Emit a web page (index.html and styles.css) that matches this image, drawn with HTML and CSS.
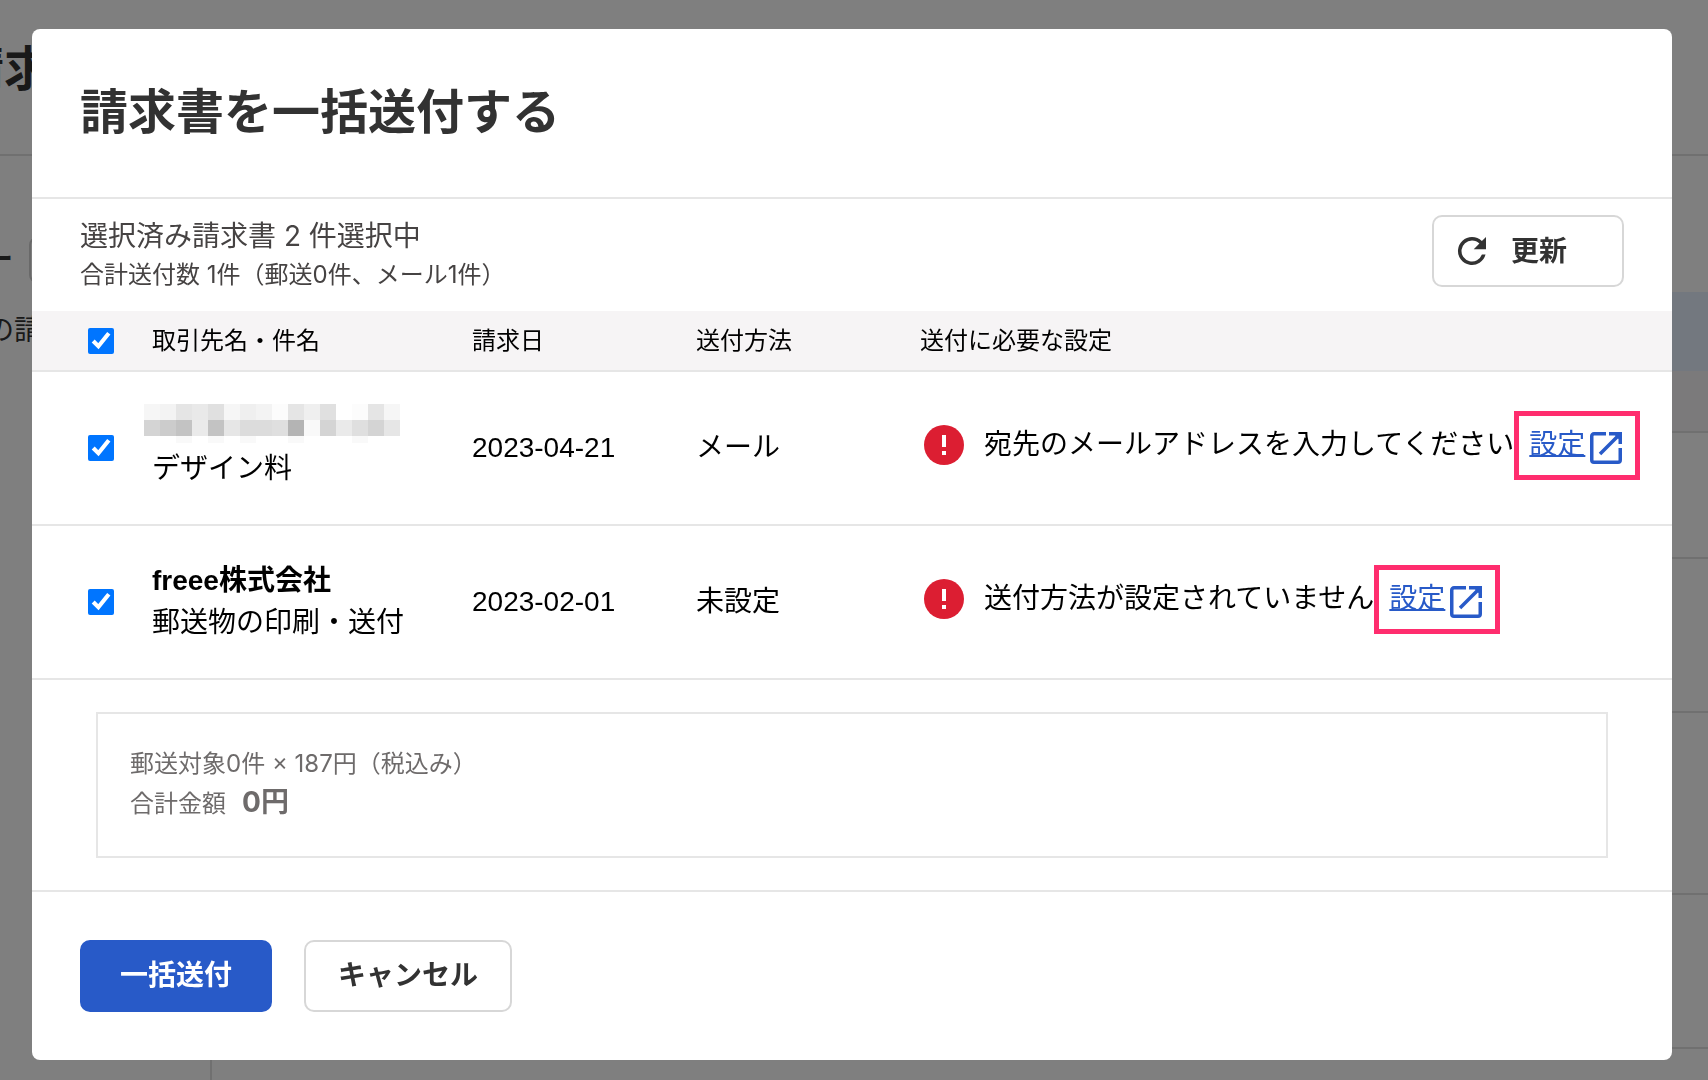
FILE: index.html
```html
<!DOCTYPE html>
<html lang="ja">
	<head>
		<meta charset="UTF-8" />
		<meta name="viewport" content="width=device-width, initial-scale=1.0" />
		<title>請求書を一括送付する</title>

		<link rel="stylesheet" href="styles.css">
	</head>
	<body>
		<!-- page behind the dialog -->
		<div class="page" aria-hidden="true">
			<div class="page-header">請求</div>
			<div class="page-filter">
				<span class="filter-label">ー</span>
				<span class="filter-box"></span>
			</div>
			<div class="page-body">
				<div class="page-side">の請</div>
				<div class="page-list">
					<div class="page-row selected"></div>
					<div class="page-row head"></div>
					<div class="page-row short"></div>
					<div class="page-row"></div>
					<div class="page-row tall"></div>
					<div class="page-row"></div>
				</div>
			</div>
		</div>

		<div class="overlay">
			<div class="modal" role="dialog" aria-labelledby="modalTitle">
				<header class="modal-header">
					<h1 id="modalTitle">請求書を一括送付する</h1>
				</header>

				<div class="toolbar">
					<div>
						<p class="selected-count">選択済み請求書 2 件選択中</p>
						<p class="send-count">合計送付数 1件（郵送0件、メール1件）</p>
					</div>
					<button type="button" class="btn btn-refresh">
						<svg class="icon-refresh" viewBox="0 0 24 24" aria-hidden="true">
							<path d="M17.65 6.35A7.96 7.96 0 0 0 12 4a8 8 0 1 0 7.73 10h-2.08A6 6 0 1 1 12 6c1.66 0 3.14.69 4.22 1.78L13 11h7V4z" />
						</svg>
						更新
					</button>
				</div>

				<table class="invoices">
					<thead>
						<tr>
							<th class="col-check"><input type="checkbox" aria-label="すべて選択" checked /></th>
							<th class="col-name">取引先名・件名</th>
							<th class="col-date">請求日</th>
							<th class="col-method">送付方法</th>
							<th>送付に必要な設定</th>
						</tr>
					</thead>
					<tbody>
						<tr>
							<td class="col-check"><input type="checkbox" aria-label="デザイン料" checked /></td>
							<td>
								<svg class="masked" viewBox="0 0 256 39" shape-rendering="crispEdges" aria-hidden="true">
									<path fill="#f6f6f6" d="M0 0h16v16H0zM80 0h16v16H80zM240 0h16v16h-16z" />
									<path fill="#f3f3f3" d="M16 0h16v16H16zM112 0h16v16h-16z" />
									<path fill="#e5e5e5" d="M32 0h16v16H32zM144 0h16v16h-16zM224 0h16v16h-16z" />
									<path fill="#e9e9e9" d="M48 0h16v16H48z" />
									<path fill="#e0e0e0" d="M64 0h16v16H64zM176 0h16v16h-16z" />
									<path fill="#efefef" d="M96 0h16v16H96zM160 0h16v16h-16z" />
									<path fill="#fcfcfc" d="M128 0h16v16h-16zM208 0h16v16h-16z" />
									<path fill="#d4d4d4" d="M0 16h16v16H0zM176 16h16v16h-16zM224 16h16v16h-16z" />
									<path fill="#cccccc" d="M16 16h16v16H16z" />
									<path fill="#c3c3c3" d="M32 16h16v16H32zM64 16h16v16H64z" />
									<path fill="#eaeaea" d="M48 16h16v16H48zM192 16h16v16h-16z" />
									<path fill="#e6e6e6" d="M80 16h16v16H80zM240 16h16v16h-16z" />
									<path fill="#dcdcdc" d="M96 16h32v16H96z" />
									<path fill="#dfdfdf" d="M128 16h16v16h-16zM208 16h16v16h-16z" />
									<path fill="#b4b4b4" d="M144 16h16v16h-16z" />
									<path fill="#f9f9f9" d="M160 16h16v16h-16zM32 32h16v7H32zM64 32h16v7H64zM96 32h16v7H96zM144 32h16v7h-16zM208 32h16v7h-16z" />
								</svg>
								<div>デザイン料</div>
							</td>
							<td>2023-04-21</td>
							<td>メール</td>
							<td>
								<div class="status">
									<svg class="icon-error" viewBox="0 0 40 40" aria-hidden="true">
										<circle cx="20" cy="20" r="20" fill="#dc1e32" />
										<path fill="#fff" d="M18 10h4v12h-4zM18 26h4v4h-4z" />
									</svg>
									<span>宛先のメールアドレスを入力してください</span>
									<a class="setting" href="#">
										<span>設定</span>
										<svg class="icon-open" viewBox="0 0 32 32" aria-hidden="true">
											<path fill="none" stroke="#285ac8" stroke-width="3.5" d="M16 1.75H4A2.25 2.25 0 0 0 1.75 4v24A2.25 2.25 0 0 0 4 30.25h24A2.25 2.25 0 0 0 30.25 28V16M10 22 29 3" />
											<path fill="#285ac8" d="M19 0h13v12h-3.5V7L25 3.500h-6z" />
										</svg>
									</a>
								</div>
							</td>
						</tr>
						<tr>
							<td class="col-check"><input type="checkbox" aria-label="郵送物の印刷・送付" checked /></td>
							<td>
								<div class="partner">freee株式会社</div>
								<div>郵送物の印刷・送付</div>
							</td>
							<td>2023-02-01</td>
							<td>未設定</td>
							<td>
								<div class="status">
									<svg class="icon-error" viewBox="0 0 40 40" aria-hidden="true">
										<circle cx="20" cy="20" r="20" fill="#dc1e32" />
										<path fill="#fff" d="M18 10h4v12h-4zM18 26h4v4h-4z" />
									</svg>
									<span>送付方法が設定されていません</span>
									<a class="setting" href="#">
										<span>設定</span>
										<svg class="icon-open" viewBox="0 0 32 32" aria-hidden="true">
											<path fill="none" stroke="#285ac8" stroke-width="3.5" d="M16 1.75H4A2.25 2.25 0 0 0 1.75 4v24A2.25 2.25 0 0 0 4 30.25h24A2.25 2.25 0 0 0 30.25 28V16M10 22 29 3" />
											<path fill="#285ac8" d="M19 0h13v12h-3.5V7L25 3.500h-6z" />
										</svg>
									</a>
								</div>
							</td>
						</tr>
					</tbody>
				</table>

				<div class="summary">
					<p>郵送対象0件 × 187円（税込み）</p>
					<p class="total">合計金額<strong>0円</strong></p>
				</div>

				<footer class="modal-footer">
					<button type="submit" class="btn btn-primary">一括送付</button>
					<button type="button" class="btn">キャンセル</button>
				</footer>
			</div>
		</div>
	</body>
</html>
```

FILE: styles.css
```css
* {
	box-sizing: border-box;
}
body {
	margin: 0;
	height: 100vh;
	overflow: hidden;
	background: #fff;
	color: #000;
	font-family: 'Liberation Sans', 'Noto Sans CJK JP', sans-serif;
	font-size: 28px;
	line-height: 42px;
}
h1,
p {
	margin: 0;
}

/* background page */
.page {
	display: flex;
	flex-direction: column;
	height: 100vh;
	overflow: hidden;
	color: #323232;
}
.page-header {
	flex: none;
	height: 156px;
	padding-top: 34px;
	border-bottom: 2px solid #e1e1e1;
	font-size: 48px;
	font-weight: bold;
	line-height: 72px;
	text-indent: -44px;
}
.page-filter {
	display: flex;
	flex: none;
	align-items: center;
	margin: 81px 0 9px;
}
.filter-label {
	width: 29px;
	font-weight: bold;
	text-indent: -15px;
}
.filter-box {
	width: 300px;
	height: 46px;
	border: 2px solid #d2d2d2;
	border-radius: 8px;
}
.page-body {
	display: flex;
	flex: 1;
	min-height: 0;
}
.page-side {
	width: 212px;
	padding-top: 18px;
	border-right: 2px solid #e1e1e1;
	text-indent: -14px;
}
.page-list {
	flex: 1;
}
.page-row {
	height: 154px;
	border-bottom: 2px solid #e1e1e1;
}
.page-row.selected {
	height: 79px;
	border: none;
	background: #e6f0ff;
}
.page-row.head {
	height: 62px;
	background: #f7f5f6;
}
.page-row.short {
	height: 126px;
}
.page-row.tall {
	height: 182px;
}

/* dialog */
.overlay {
	position: fixed;
	inset: 0;
	padding: 29px 36px 19px 32px;
	background: rgba(0, 0, 0, 0.5);
}
.modal {
	background: #fff;
	border-radius: 8px;
}
.modal-header {
	padding: 48px;
	border-bottom: 2px solid #e6e6e6;
	color: #323232;
}
.modal-header h1 {
	font-size: 48px;
	line-height: 72px;
}
.toolbar,
.summary {
	font-family: Inter, 'Noto Sans CJK JP', sans-serif;
}
.toolbar {
	display: flex;
	justify-content: space-between;
	align-items: flex-start;
	padding: 16px 48px 18px;
	color: #464343;
}
.send-count {
	font-size: 24px;
	line-height: 36px;
}

.btn {
	min-width: 192px;
	height: 72px;
	padding: 0 32px;
	border: 2px solid #d7d7d7;
	border-radius: 10px;
	background: #fff;
	color: #323232;
	font: inherit;
	font-weight: bold;
}
.btn-refresh {
	display: flex;
	align-items: center;
	gap: 18px;
	padding: 0 17px;
}
.icon-refresh {
	width: 42px;
	height: 42px;
	fill: #323232;
}
.btn-primary {
	border-color: #285ac8;
	background: #285ac8;
	color: #fff;
}

.invoices {
	width: 100%;
	border-spacing: 0;
	table-layout: fixed;
}
.invoices th {
	height: 61px;
	padding: 0;
	border-bottom: 2px solid #e6e6e6;
	background: #f6f4f5;
	font-size: 24px;
	font-weight: normal;
	line-height: 36px;
	text-align: left;
}
.invoices td {
	height: 154px;
	padding: 0;
	border-bottom: 2px solid #e6e6e6;
	white-space: nowrap;
}
.invoices .col-check {
	width: 120px;
	padding-left: 56px;
}
.col-name {
	width: 320px;
}
.col-date,
.col-method {
	width: 224px;
}
.invoices input {
	display: block;
	width: 26px;
	height: 26px;
	margin: 0;
	accent-color: #0075ff;
}
.masked {
	display: block;
	width: 256px;
	height: 39px;
	margin: -2px 0 5px -8px;
}
.partner {
	font-weight: bold;
}

.status {
	display: flex;
	align-items: center;
	padding: 0 0 6px 4px;
}
.icon-error {
	flex: none;
	width: 40px;
	height: 40px;
	margin-right: 20px;
}
.setting {
	display: flex;
	align-items: center;
	gap: 5px;
	height: 69px;
	padding: 0 13px 0 10px;
	border: 5px solid #ff2d6e;
	color: #285ac8;
	text-decoration: none;
}
.setting span {
	text-decoration: underline;
	text-decoration-thickness: 2px;
}
.icon-open {
	width: 32px;
	height: 32px;
	margin-top: 6px;
}

.summary {
	margin: 32px 64px;
	padding: 32px;
	border: 2px solid #e6e6e6;
	color: #6e6b6b;
	font-size: 24px;
	line-height: 36px;
}
.total {
	line-height: 41px;
}
.total strong {
	margin-left: 16px;
	font-size: 28px;
}

.modal-footer {
	display: flex;
	gap: 32px;
	padding: 48px;
	border-top: 2px solid #e6e6e6;
}
```
